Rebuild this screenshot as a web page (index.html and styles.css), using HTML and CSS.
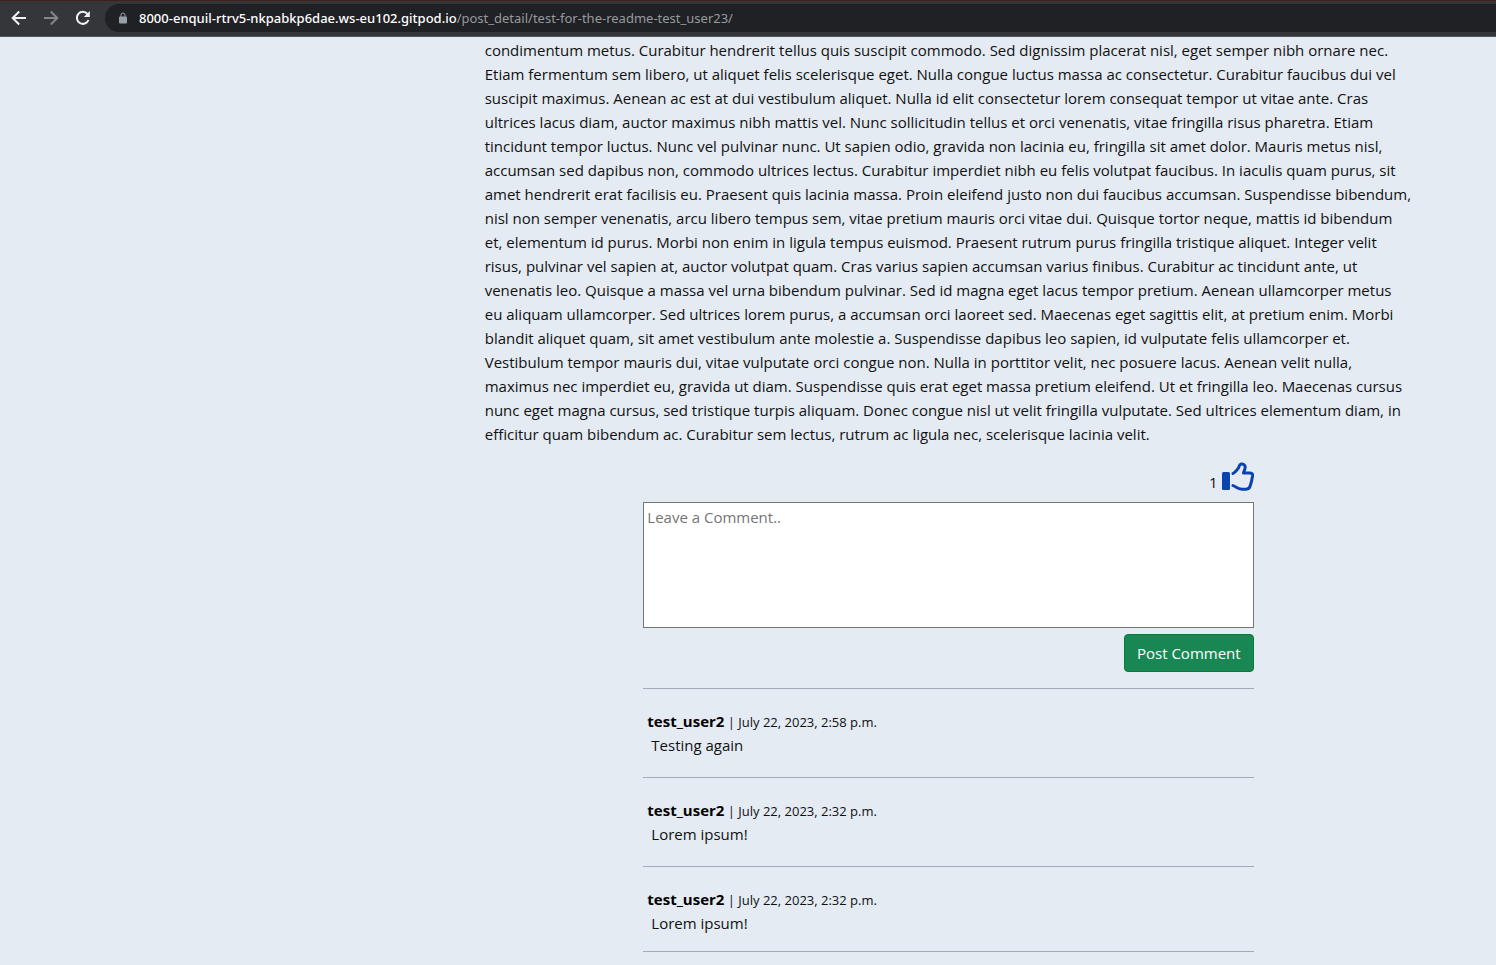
FILE: index.html
```html
<!DOCTYPE html>
<html lang="en">
<head>
<meta charset="utf-8">
<title>Post detail</title>
<link rel="stylesheet" href="styles.css">
</head>
<body>
<header class="toolbar">
  <button class="nav-button" type="button" aria-label="Back"><svg viewBox="0 0 16 16"><path d="M15 8H2M8.200 1.500 1.700 8l6.500 6.500"/></svg></button>
  <button class="nav-button nav-disabled" type="button" aria-label="Forward"><svg viewBox="0 0 16 16"><path d="M1 8h13M7.800 1.500 14.300 8l-6.500 6.500"/></svg></button>
  <button class="nav-button" type="button" aria-label="Reload"><svg viewBox="0 0 16 16"><path d="M13.500 10A6 6 0 1 1 12.500 4"/><path class="solid" d="M14.800 1v6H8.800z"/></svg></button>
  <div class="address">
    <svg class="lock" viewBox="0 0 8 12"><path d="M2 5V3a2 2 0 0 1 4 0v2"/><rect y="4.500" width="8" height="7" rx="1"/></svg>
    <a class="url" href="#"><span class="host">8000-enquil-rtrv5-nkpabkp6dae.ws-eu102.gitpod.io</span>/post_detail/test-for-the-readme-test_user23/</a>
  </div>
</header>
<main class="post">
  <p class="body-text">condimentum metus. Curabitur hendrerit tellus quis suscipit commodo. Sed dignissim placerat nisl, eget semper nibh ornare nec.
Etiam fermentum sem libero, ut aliquet felis scelerisque eget. Nulla congue luctus massa ac consectetur. Curabitur faucibus dui vel
suscipit maximus. Aenean ac est at dui vestibulum aliquet. Nulla id elit consectetur lorem consequat tempor ut vitae ante. Cras
ultrices lacus diam, auctor maximus nibh mattis vel. Nunc sollicitudin tellus et orci venenatis, vitae fringilla risus pharetra. Etiam
tincidunt tempor luctus. Nunc vel pulvinar nunc. Ut sapien odio, gravida non lacinia eu, fringilla sit amet dolor. Mauris metus nisl,
accumsan sed dapibus non, commodo ultrices lectus. Curabitur imperdiet nibh eu felis volutpat faucibus. In iaculis quam purus, sit
amet hendrerit erat facilisis eu. Praesent quis lacinia massa. Proin eleifend justo non dui faucibus accumsan. Suspendisse bibendum,
nisl non semper venenatis, arcu libero tempus sem, vitae pretium mauris orci vitae dui. Quisque tortor neque, mattis id bibendum
et, elementum id purus. Morbi non enim in ligula tempus euismod. Praesent rutrum purus fringilla tristique aliquet. Integer velit
risus, pulvinar vel sapien at, auctor volutpat quam. Cras varius sapien accumsan varius finibus. Curabitur ac tincidunt ante, ut
venenatis leo. Quisque a massa vel urna bibendum pulvinar. Sed id magna eget lacus tempor pretium. Aenean ullamcorper metus
eu aliquam ullamcorper. Sed ultrices lorem purus, a accumsan orci laoreet sed. Maecenas eget sagittis elit, at pretium enim. Morbi
blandit aliquet quam, sit amet vestibulum ante molestie a. Suspendisse dapibus leo sapien, id vulputate felis ullamcorper et.
Vestibulum tempor mauris dui, vitae vulputate orci congue non. Nulla in porttitor velit, nec posuere lacus. Aenean velit nulla,
maximus nec imperdiet eu, gravida ut diam. Suspendisse quis erat eget massa pretium eleifend. Ut et fringilla leo. Maecenas cursus
nunc eget magna cursus, sed tristique turpis aliquam. Donec congue nisl ut velit fringilla vulputate. Sed ultrices elementum diam, in
efficitur quam bibendum ac. Curabitur sem lectus, rutrum ac ligula nec, scelerisque lacinia velit.</p>
  <section class="discussion">
    <div class="likes">
      <span class="count">1</span>
      <button class="like" type="button" aria-label="Like"><svg viewBox="0 0 32 29"><rect x="0" y="10" width="8" height="18" rx="1.500"/><path d="M11 11.500c3-1.500 4-4 5.500-5.500.6-2 .8-3.500 2.500-4 3-.6 4.700 1.600 4 4.400-.4 2-1.300 3-1.500 4.600H28c2.500 0 3.400 2 2.300 4.200l-.8 4.300-1.200 4c-.5 2.500-1.500 3.700-4.300 3.700h-4c-4 0-5.500-2-9-3.700"/></svg></button>
    </div>
    <form class="comment-form">
      <textarea class="comment-box" aria-label="Comment" placeholder="Leave a Comment.."></textarea>
      <button class="submit" type="button">Post Comment</button>
    </form>
    <article class="comment">
      <p class="meta"><strong>test_user2</strong><span class="date"> | <time>July 22, 2023, 2:58 p.m.</time></span></p>
      <p class="message">Testing again</p>
    </article>
    <article class="comment">
      <p class="meta"><strong>test_user2</strong><span class="date"> | <time>July 22, 2023, 2:32 p.m.</time></span></p>
      <p class="message">Lorem ipsum!</p>
    </article>
    <article class="comment comment-last">
      <p class="meta"><strong>test_user2</strong><span class="date"> | <time>July 22, 2023, 2:32 p.m.</time></span></p>
      <p class="message">Lorem ipsum!</p>
    </article>
  </section>
</main>
</body>
</html>
```
FILE: styles.css
```css
* { box-sizing: border-box; }

body {
  margin: 0;
  background: #e4ebf3;
  color: #111;
  font: 15px/24px "Segoe UI", "Open Sans", sans-serif;
}

p { margin: 0; }
button { border: 0; padding: 0; background: none; font: inherit; }

.toolbar {
  display: flex;
  align-items: center;
  gap: 16px;
  height: 37px;
  padding: 0 0 2px 11px;
  background: #35363a;
  border-top: 1px solid #3c241b;
  border-bottom: 1px solid #55565a;
}
.nav-button { width: 16px; height: 16px; color: #f1f3f4; }
.nav-button svg {
  display: block;
  fill: none;
  stroke: currentColor;
  stroke-width: 2;
}
.nav-button .solid { fill: currentColor; stroke: none; }
.nav-disabled { color: #85868a; }
.address {
  display: flex;
  flex: 1;
  align-items: center;
  gap: 12px;
  height: 28px;
  margin-left: -2px;
  padding-left: 14px;
  border-radius: 14px 0 0 14px;
  background: #202124;
}
.lock { width: 8px; height: 12px; fill: #9aa0a6; }
.lock path { fill: none; stroke: #9aa0a6; stroke-width: 1; }
.url {
  color: #969a9e;
  font-family: "Segoe UI", "Noto Sans", sans-serif;
  font-size: 13px;
  text-decoration: none;
  white-space: nowrap;
}
.host { color: #fff; font-weight: 500; }

.post { padding: 1px 5.6% 0 32.4%; }
.body-text { white-space: pre-line; }
.discussion {
  width: 65.8%;
  min-width: 320px;
  margin: 0 auto;
}
.likes {
  display: flex;
  align-items: flex-end;
  justify-content: flex-end;
  gap: 4px;
  height: 45px;
}
.count { line-height: 18px; }
.like { width: 32px; height: 29px; color: #0a43ae; }
.like svg { display: block; fill: currentColor; }
.like path {
  fill: none;
  stroke: currentColor;
  stroke-width: 3;
  stroke-linecap: round;
  stroke-linejoin: round;
}

.comment-form {
  display: flex;
  flex-direction: column;
  align-items: flex-end;
  gap: 6px;
  padding: 11px 0 16px;
}
.comment-box {
  width: 100%;
  height: 126px;
  padding: 2px 3px;
  border: 1px solid #767676;
  border-radius: 0;
  background: #fff;
  font: inherit;
  resize: none;
}
.comment-box::placeholder { color: #757575; }
.submit {
  height: 38px;
  padding: 0 12px;
  border: 1px solid #0b7a35;
  border-radius: 4px;
  background: #198754;
  color: #fff;
}
.comment {
  height: 89px;
  padding: 20px 4px 0;
  border-top: 1px solid #a5abb4;
}
.comment-last { height: 86px; border-bottom: 1px solid #a5abb4; }
.meta strong { color: #000; }
.date { font-size: 13px; line-height: 20px; }
.message { padding-left: 4px; }
```
